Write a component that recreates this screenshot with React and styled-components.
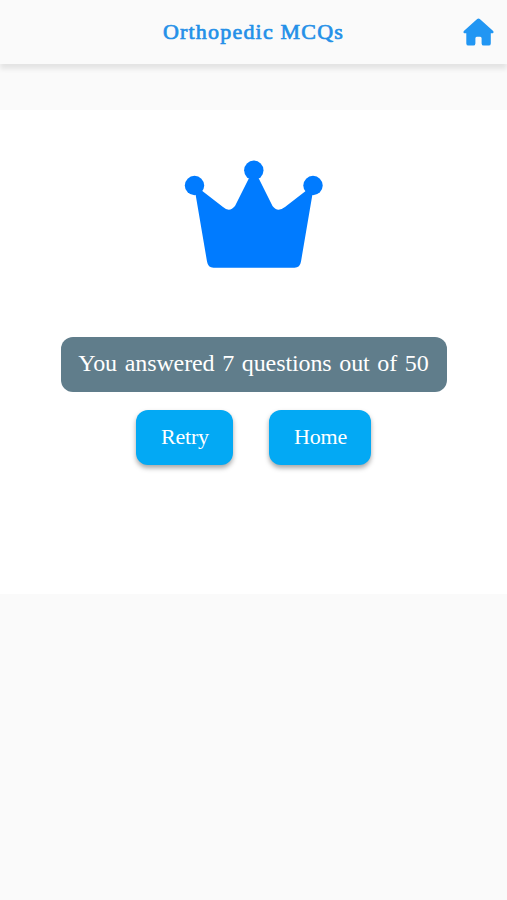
import React from "react";
import styled, { createGlobalStyle } from "styled-components";

const GlobalStyle = createGlobalStyle`
  * {
    box-sizing: border-box;
  }
  body {
    margin: 0;
    background-color: #fafafa;
    font-family: "Liberation Serif", serif;
  }
`;

const StyledPage = styled.div`
  display: flex;
  flex-direction: column;
  min-height: 100vh;
`;

const StyledHeader = styled.header`
  display: grid;
  grid-template-columns: 1fr auto 1fr;
  align-items: center;
  height: 64px;
  padding: 0 13px;
  background-color: #fafafa;
  box-shadow: 0 5px 5px rgba(0, 0, 0, 0.09);
`;

const StyledTitle = styled.h1`
  grid-column: 2;
  margin: 0;
  color: #2490e8;
  font-size: 22px;
  line-height: 30px;
  font-weight: 400;
  letter-spacing: 1.2px;
  -webkit-text-stroke: 0.7px #2490e8;
  white-space: nowrap;
`;

const StyledHomeLink = styled.a`
  display: flex;
  justify-self: end;
`;

const StyledResult = styled.main`
  display: flex;
  flex-direction: column;
  align-items: center;
  height: 484px;
  margin-top: 46px;
  padding-top: 50px;
  background-color: #fff;
`;

const StyledCrown = styled.svg`
  display: block;
  width: 140px;
  height: 109px;
`;

const StyledScore = styled.p`
  display: flex;
  justify-content: center;
  width: 386px;
  height: 55px;
  margin: 68px 0 0;
  border-radius: 12px;
  background-color: #607d8b;
  color: #fff;
  font-size: 24px;
  line-height: 52px;
  letter-spacing: -0.1px;
  word-spacing: 1.8px;
  white-space: nowrap;
`;

const StyledActions = styled.div`
  display: flex;
  gap: 36px;
  margin-top: 18px;
`;

const StyledButton = styled.button`
  width: ${(props) => props.$width};
  height: 55px;
  padding: 0 0 1px 1px;
  border: none;
  border-radius: 12px;
  background-color: #03a9f4;
  box-shadow: 0 3px 5px rgba(0, 0, 0, 0.35);
  color: #fff;
  font-family: inherit;
  font-size: 22px;
  letter-spacing: -0.2px;
  cursor: pointer;
`;

const HomeIcon = () => (
  <svg width="31" height="28" viewBox="0 0 31 28" fill="#2196f3">
    <path d="M14.2 1.1Q15.5 0 16.8 1.1L29.9 12.7C31.2 14 30.5 15.3 29 15.3H27.8V25.4Q27.8 27.6 25.6 27.6H20.8Q18.6 27.6 18.6 25.4V20.2Q18.6 18.7 17.2 18.7H13.8Q12.4 18.7 12.4 20.2V25.4Q12.4 27.6 10.2 27.6H5.5Q3.3 27.6 3.3 25.4V15.3H2C.5 15.3-.2 14 1.1 12.7Z" />
  </svg>
);

const Crown = () => (
  <StyledCrown viewBox="184 160 140 109" fill="#007bff">
    <circle cx="194.5" cy="185.5" r="9.7" />
    <circle cx="253.8" cy="170.3" r="9.7" />
    <circle cx="313" cy="185.5" r="9.7" />
    <path d="M195.5 194L202 190.8L223 207Q229.5 212.8 235 206L248.8 178.5H258.8L272.5 206Q277.5 212.8 285 207L306 190.8L312.5 194L301 261.5Q300 267.7 294.5 267.7H213.5Q208 267.7 207 261.5Z" />
  </StyledCrown>
);

const App = () => {
  const score = 7;
  const total = 50;

  return (
    <>
      <GlobalStyle />
      <StyledPage>
        <StyledHeader>
          <StyledTitle>Orthopedic MCQs</StyledTitle>
          <StyledHomeLink aria-label="Home">
            <HomeIcon />
          </StyledHomeLink>
        </StyledHeader>
        <StyledResult>
          <Crown />
          <StyledScore>{`You answered ${score} questions out of ${total}`}</StyledScore>
          <StyledActions>
            <StyledButton $width="97px">Retry</StyledButton>
            <StyledButton $width="102px">Home</StyledButton>
          </StyledActions>
        </StyledResult>
      </StyledPage>
    </>
  );
};

export default App;
